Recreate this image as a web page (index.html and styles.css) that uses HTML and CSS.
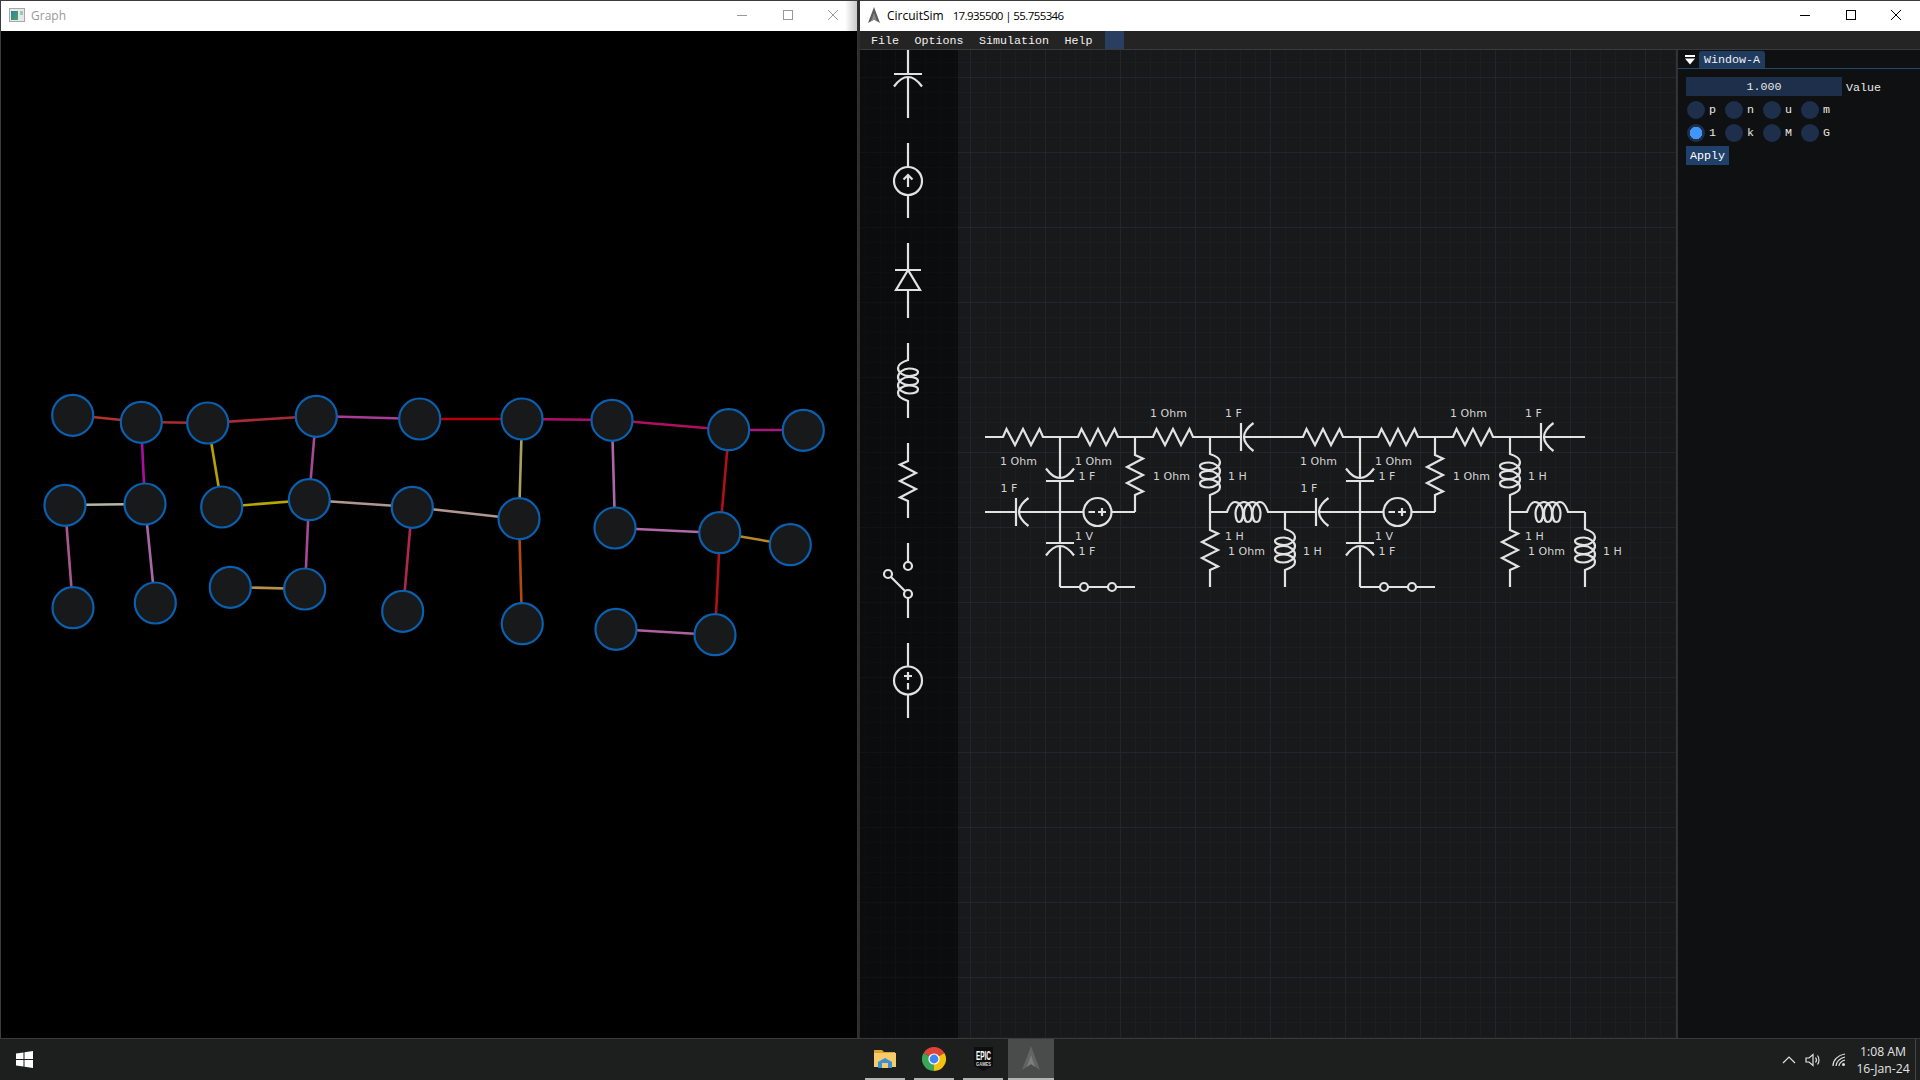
FILE: index.html
```html
<!DOCTYPE html>
<html lang="en">
<head>
    <meta charset="UTF-8">
    <title>CircuitSim</title>
    <link rel="stylesheet" href="styles.css">
</head>
<body>
    <div class="desktop">

        <!-- graph window -->
        <section class="window window-graph">
            <div class="titlebar inactive">
                <svg class="app-icon" width="16" height="14" viewBox="0 0 16 14">
                    <defs>
                        <linearGradient id="graphIcon" x1="0" y1="0" x2="1" y2="1">
                            <stop offset="0" stop-color="#2f7f9f"/>
                            <stop offset="1" stop-color="#4fa060"/>
                        </linearGradient>
                    </defs>
                    <rect x="0.5" y="0.5" width="15" height="13" fill="#e8e8e8" stroke="#a8a8a8"/>
                    <rect x="2" y="3" width="7" height="9" fill="url(#graphIcon)"/>
                    <rect x="11" y="3" width="3" height="4" fill="#9fc8b0"/>
                </svg>
                <span class="title-text">Graph</span>
                <div class="win-controls">
                    <span class="win-btn"><svg width="12" height="12" viewBox="0 0 12 12"><path d="M1 6.5H11"/></svg></span>
                    <span class="win-btn"><svg width="12" height="12" viewBox="0 0 12 12"><rect x="1.5" y="1.5" width="9" height="9"/></svg></span>
                    <span class="win-btn"><svg width="12" height="12" viewBox="0 0 12 12"><path d="M1 1L11 11M11 1L1 11"/></svg></span>
                </div>
            </div>
            <div class="graph-client">
                <svg class="graph-svg" width="856" height="1007" viewBox="1 31 856 1007">
                    <g class="edges">
                        <line x1="73" y1="415" x2="141" y2="422" stroke="#b03428"/>
                        <line x1="141" y1="422" x2="208" y2="423" stroke="#a82c30"/>
                        <line x1="208" y1="423" x2="316" y2="416" stroke="#a82c38"/>
                        <line x1="316" y1="416" x2="420" y2="419" stroke="#a83c98"/>
                        <line x1="141" y1="422" x2="145" y2="504" stroke="#a810a0"/>
                        <line x1="208" y1="423" x2="222" y2="507" stroke="#b8a000"/>
                        <line x1="222" y1="507" x2="309" y2="500" stroke="#b8a800"/>
                        <line x1="316" y1="416" x2="309" y2="500" stroke="#a84898"/>
                        <line x1="65" y1="505" x2="145" y2="504" stroke="#b8b8a0"/>
                        <line x1="65" y1="505" x2="73" y2="608" stroke="#a85890"/>
                        <line x1="145" y1="504" x2="155" y2="603" stroke="#a868a8"/>
                        <line x1="309" y1="500" x2="305" y2="589" stroke="#a84898"/>
                        <line x1="230" y1="587" x2="305" y2="589" stroke="#b89048"/>
                        <line x1="309" y1="500" x2="412" y2="507" stroke="#b09890"/>
                        <line x1="412" y1="507" x2="403" y2="611" stroke="#b02850"/>
                        <line x1="412" y1="507" x2="519" y2="519" stroke="#b09890"/>
                        <line x1="420" y1="419" x2="522" y2="419" stroke="#b80008"/>
                        <line x1="522" y1="419" x2="612" y2="420" stroke="#b01068"/>
                        <line x1="612" y1="420" x2="729" y2="430" stroke="#b01060"/>
                        <line x1="729" y1="430" x2="803" y2="430" stroke="#a81878"/>
                        <line x1="522" y1="419" x2="519" y2="519" stroke="#a8a060"/>
                        <line x1="612" y1="420" x2="615" y2="528" stroke="#a868a8"/>
                        <line x1="729" y1="430" x2="720" y2="533" stroke="#b01018"/>
                        <line x1="615" y1="528" x2="720" y2="533" stroke="#b068a8"/>
                        <line x1="720" y1="533" x2="790" y2="545" stroke="#b88828"/>
                        <line x1="519" y1="519" x2="522" y2="624" stroke="#b04810"/>
                        <line x1="720" y1="533" x2="715" y2="635" stroke="#b01018"/>
                        <line x1="616" y1="629" x2="715" y2="635" stroke="#b060a0"/>
                    </g>
                    <g class="nodes">
                        <circle cx="72.7" cy="415.3" r="20.5"/>
                        <circle cx="141.3" cy="422.3" r="20.5"/>
                        <circle cx="207.7" cy="423" r="20.5"/>
                        <circle cx="316.3" cy="416.3" r="20.5"/>
                        <circle cx="419.7" cy="419" r="20.5"/>
                        <circle cx="522" cy="419" r="20.5"/>
                        <circle cx="612" cy="420.3" r="20.5"/>
                        <circle cx="728.7" cy="429.7" r="20.5"/>
                        <circle cx="803.3" cy="430.3" r="20.5"/>
                        <circle cx="65" cy="505.3" r="20.5"/>
                        <circle cx="145" cy="504" r="20.5"/>
                        <circle cx="221.7" cy="507" r="20.5"/>
                        <circle cx="309.3" cy="499.7" r="20.5"/>
                        <circle cx="412.3" cy="507.3" r="20.5"/>
                        <circle cx="519" cy="518.7" r="20.5"/>
                        <circle cx="615" cy="528" r="20.5"/>
                        <circle cx="719.7" cy="532.7" r="20.5"/>
                        <circle cx="790.3" cy="544.7" r="20.5"/>
                        <circle cx="73" cy="607.7" r="20.5"/>
                        <circle cx="155.3" cy="603" r="20.5"/>
                        <circle cx="230.3" cy="587.3" r="20.5"/>
                        <circle cx="304.7" cy="589" r="20.5"/>
                        <circle cx="402.7" cy="611.3" r="20.5"/>
                        <circle cx="522.3" cy="623.7" r="20.5"/>
                        <circle cx="616" cy="629.3" r="20.5"/>
                        <circle cx="715" cy="634.7" r="20.5"/>
                    </g>
                </svg>
            </div>
        </section>

        <!-- circuit window -->
        <section class="window window-sim">
            <div class="titlebar">
                <svg class="app-icon spire-icon" width="14" height="17" viewBox="0 0 14 17">
                    <path d="M7 0L13 16L7 12.5L1 16Z" fill="#5c5c5c"/>
                    <path d="M7 6L10 14.5L7 12.5L4 14.5Z" fill="#8a8a8a"/>
                </svg>
                <span class="title-text">CircuitSim</span>
                <span class="title-text title-coords">17.935500 | 55.755346</span>
                <div class="win-controls">
                    <span class="win-btn"><svg width="12" height="12" viewBox="0 0 12 12"><path d="M1 6.5H11"/></svg></span>
                    <span class="win-btn"><svg width="12" height="12" viewBox="0 0 12 12"><rect x="1.5" y="1.5" width="9" height="9"/></svg></span>
                    <span class="win-btn"><svg width="12" height="12" viewBox="0 0 12 12"><path d="M1 1L11 11M11 1L1 11"/></svg></span>
                </div>
            </div>

            <nav class="menubar">
                <span>File</span>
                <span>Options</span>
                <span>Simulation</span>
                <span>Help</span>
                <span class="menu-block"></span>
            </nav>

            <div class="sim-body">
                <div class="canvas">
                    <div class="palette"></div>

                    <svg class="circuit-svg" width="816" height="988" viewBox="860 50 816 988">
                        <defs>
                            <g id="res" class="wire">
                                <path d="M0 0H18L21.5 -8L30 8L38 -8L46 8L54.5 -8L58 0H75"/>
                            </g>
                            <g id="cap" class="wire">
                                <path d="M0 0H31M31 -14V14M34 0H75"/>
                                <path d="M43.5 -14Q24.5 0 43.5 14"/>
                            </g>
                            <g id="ind" class="wire">
                                <path d="M0 0H17C19 -6 22 -10 25 -10C30 -10 33 -4 33 1C33 7 31 10 29 10C27 10 25.5 6 25.5 1C25.5 -5 30 -10 34 -10C39 -10 42 -4 42 1C42 7 40 10 37.7 10C35.5 10 34 6 34 1C34 -5 38 -10 42.5 -10C47 -10 50.5 -4 50.5 1C50.5 7 48.5 10 46.3 10C44 10 42.5 6 42.5 1C42.5 -5 46 -10 50 -10C53 -10 56 -6 58 0H75"/>
                            </g>
                            <g id="volt" class="wire">
                                <path d="M0 0H23.5M51.5 0H75"/>
                                <circle cx="37.5" cy="0" r="14"/>
                                <path d="M28.5 0H35M38 0H46M42 -4V4"/>
                            </g>
                            <g id="block">
                                <use href="#res" x="985" y="437"/>
                                <use href="#res" x="1060" y="437"/>
                                <use href="#res" x="1135" y="437"/>
                                <use href="#cap" transform="translate(1210 437)"/>
                                <use href="#cap" transform="translate(985 512)"/>
                                <use href="#cap" transform="translate(1060 512) rotate(-90)"/>
                                <use href="#cap" transform="translate(1060 512) rotate(90)"/>
                                <use href="#volt" transform="translate(1060 512)"/>
                                <use href="#res" transform="translate(1135 437) rotate(90)"/>
                                <use href="#ind" transform="translate(1210 437) rotate(90)"/>
                                <use href="#ind" transform="translate(1210 512)"/>
                                <use href="#res" transform="translate(1210 512) rotate(90)"/>
                                <use href="#ind" transform="translate(1285 512) rotate(90)"/>
                                <!-- switch on the bottom row -->
                                <g class="wire">
                                    <path d="M1060 587H1135"/>
                                    <circle class="pin" cx="1084" cy="587" r="4"/>
                                    <circle class="pin" cx="1112" cy="587" r="4"/>
                                </g>
                            </g>
                        </defs>

                        <use href="#block"/>
                        <use href="#block" x="300"/>

                        <!-- parts palette -->
                        <use href="#cap" transform="translate(908 43) rotate(90)"/>
                        <g class="wire">
                            <path d="M908 143V167M908 195V218"/>
                            <circle cx="908" cy="181" r="14"/>
                            <path d="M908 187V175M903.5 179.5L908 175L912.5 179.5"/>
                        </g>
                        <g class="wire">
                            <path d="M908 243V270M895 270H921M908 270L896 290H920Z M895 290H921M908 290V318"/>
                        </g>
                        <use href="#ind" transform="translate(908 343) rotate(90) scale(1 -1)"/>
                        <use href="#res" transform="translate(908 443) rotate(90) scale(1 -1)"/>
                        <g class="wire">
                            <path d="M908 543V562M908 598V618M891 577L905 591"/>
                            <circle cx="908" cy="566" r="4"/>
                            <circle cx="888" cy="574" r="4"/>
                            <circle cx="908" cy="594" r="4"/>
                        </g>
                        <use href="#volt" transform="translate(908 718) rotate(-90)"/>

                        <!-- part labels -->
                        <g class="labels">
                            <text x="1150" y="417">1 Ohm</text>
                            <text x="1225" y="417">1 F</text>
                            <text x="1000" y="465">1 Ohm</text>
                            <text x="1075" y="465">1 Ohm</text>
                            <text x="1078.5" y="480">1 F</text>
                            <text x="1153" y="480">1 Ohm</text>
                            <text x="1228" y="480">1 H</text>
                            <text x="1000.5" y="492">1 F</text>
                            <text x="1075" y="540">1 V</text>
                            <text x="1078.5" y="555">1 F</text>
                            <text x="1225" y="540">1 H</text>
                            <text x="1228" y="555">1 Ohm</text>
                            <text x="1303" y="555">1 H</text>

                            <text x="1450" y="417">1 Ohm</text>
                            <text x="1525" y="417">1 F</text>
                            <text x="1300" y="465">1 Ohm</text>
                            <text x="1375" y="465">1 Ohm</text>
                            <text x="1378.5" y="480">1 F</text>
                            <text x="1453" y="480">1 Ohm</text>
                            <text x="1528" y="480">1 H</text>
                            <text x="1300.5" y="492">1 F</text>
                            <text x="1375" y="540">1 V</text>
                            <text x="1378.5" y="555">1 F</text>
                            <text x="1525" y="540">1 H</text>
                            <text x="1528" y="555">1 Ohm</text>
                            <text x="1603" y="555">1 H</text>
                        </g>
                    </svg>
                </div>

                <aside class="panel">
                    <div class="tab-bar">
                        <svg class="tab-arrow" width="10" height="10" viewBox="0 0 10 10">
                            <path d="M0 0H10V2H0Z M0 3.5H10L5 9.5Z" fill="#fff"/>
                        </svg>
                        <span class="tab">Window-A</span>
                    </div>
                    <div class="panel-body">
                        <div class="value-row">
                            <div class="value-input">1.000</div>
                            <span class="value-label">Value</span>
                        </div>
                        <div class="radio-grid">
                            <label class="radio"><i></i>p</label>
                            <label class="radio"><i></i>n</label>
                            <label class="radio"><i></i>u</label>
                            <label class="radio"><i></i>m</label>
                            <label class="radio checked"><i></i>1</label>
                            <label class="radio"><i></i>k</label>
                            <label class="radio"><i></i>M</label>
                            <label class="radio"><i></i>G</label>
                        </div>
                        <button class="apply">Apply</button>
                    </div>
                </aside>
            </div>
        </section>
    </div>

    <!-- taskbar -->
    <footer class="taskbar">
        <svg class="start" width="17" height="17" viewBox="0 0 17 17">
            <path d="M0 2.5L7.5 1.4V8H0ZM8.5 1.3L17 0V8H8.5ZM0 9H7.5V15.6L0 14.5ZM8.5 9H17V17L8.5 15.7Z" fill="#fff"/>
        </svg>

        <div class="task-icons">
            <div class="task-item">
                <svg width="22" height="19" viewBox="0 0 22 19">
                    <path d="M0 1H8L10 3H21V6H0Z" fill="#dfa32f"/>
                    <rect x="0" y="4" width="22" height="14" fill="#f6cb6c"/>
                    <path d="M4 13L11 9L18 13V19H4Z" fill="#3b90d4"/>
                    <rect x="8" y="14" width="6" height="5" fill="#f6cb6c"/>
                </svg>
            </div>
            <div class="task-item">
                <svg width="24" height="24" viewBox="0 0 24 24">
                    <path d="M12 12L1.6 6A12 12 0 0 1 22.4 6Z" fill="#db4437"/>
                    <path d="M12 12L22.4 6A12 12 0 0 1 12 24Z" fill="#f4c20d"/>
                    <path d="M12 12L12 24A12 12 0 0 1 1.6 6Z" fill="#3aa757"/>
                    <circle cx="12" cy="12" r="5.6" fill="#fff"/>
                    <circle cx="12" cy="12" r="4.4" fill="#4285f4"/>
                </svg>
            </div>
            <div class="task-item">
                <svg width="21" height="24" viewBox="0 0 21 24">
                    <path d="M1 0H20V19L10.5 24L1 19Z" fill="#0e0e0e"/>
                    <text class="epic-big" transform="translate(10.5 13) scale(0.72 1.33)">EPIC</text>
                    <text class="epic-small" transform="translate(10.5 18.5) scale(0.9 1)">GAMES</text>
                </svg>
            </div>
            <div class="task-item active">
                <svg width="20" height="25" viewBox="0 0 20 25">
                    <path d="M10 0L19 24L10 18L1 24Z" fill="#636565"/>
                    <path d="M10 9L14 21L10 18L6 21Z" fill="#7d7f7f"/>
                </svg>
            </div>
        </div>

        <div class="tray">
            <svg class="tray-icon tray-chevron" width="14" height="8" viewBox="0 0 14 8"><path d="M1 7L7 1L13 7"/></svg>
            <svg class="tray-icon tray-sound" width="16" height="14" viewBox="0 0 16 14"><path d="M1 5H4L8 1.5V12.5L4 9H1ZM10.5 4.5C11.7 6 11.7 8 10.5 9.5M12.5 2.5C14.5 5 14.5 9 12.5 11.5"/></svg>
            <svg class="tray-icon tray-wifi" width="14" height="14" viewBox="0 0 14 14"><path d="M1 13C1 7 6 2 13 1M4 13C4 9 8 5 13 4M7 13C7 11 9 8 13 7"/><circle class="wifi-dot" cx="11.5" cy="11.5" r="1.5"/></svg>
            <div class="clock">
                <span>1:08 AM</span>
                <span>16-Jan-24</span>
            </div>
            <span class="show-desktop"></span>
        </div>
    </footer>
</body>
</html>
```

FILE: styles.css
```css
* {
    margin: 0;
    padding: 0;
    box-sizing: border-box;
}

body {
    width: 1920px;
    height: 1080px;
    overflow: hidden;
    display: flex;
    flex-direction: column;
    background-color: #000;
    font-family: "Liberation Mono", monospace;
    font-size: 11.67px;
    color: #e8e8e8;
}

.desktop {
    display: flex;
    height: 1038px;
}

.window {
    display: flex;
    flex-direction: column;
    height: 100%;
}

.window-graph {
    width: 858px;
    border-left: 1px solid #3c3c3c;
    border-right: 1px solid #333;
}

.window-sim {
    flex: 1;
    min-width: 0;
    border-left: 2px solid #2c2c2c;
}


/* title bars */
.titlebar {
    display: flex;
    align-items: center;
    height: 31px;
    flex-shrink: 0;
    padding-bottom: 2px;
    border-top: 1px solid #3c3c3c;
    background-color: #fff;
    font-family: "Open Sans", sans-serif;
    font-size: 12px;
    color: #000;
}

.titlebar.inactive {
    background: linear-gradient(90deg, #fff calc(100% - 12px), #c8c8c8);
    color: #999;
}

.app-icon {
    margin-left: 8px;
    margin-right: 6px;
}

.spire-icon {
    margin-left: 7px;
    margin-right: 6px;
}

.title-coords {
    margin-left: 9px;
    font-size: 11.5px;
    letter-spacing: -0.6px;
}

.win-controls {
    display: flex;
    margin-left: auto;
    margin-right: 1px;
}

.win-btn {
    display: flex;
    align-items: center;
    justify-content: center;
    width: 45.5px;
    height: 28px;
}

.win-btn svg {
    fill: none;
    stroke: #000;
    stroke-width: 1;
}

.inactive .win-btn svg {
    stroke: #999;
}


/* graph */
.graph-client {
    flex: 1;
    background-color: #000;
}

.graph-svg {
    display: block;
}

.edges line {
    stroke-width: 2.6;
}

.nodes circle {
    fill: #17191b;
    stroke: #0a5fae;
    stroke-width: 2.2;
}


/* circuit window */
.menubar {
    display: flex;
    align-items: center;
    gap: 15.5px;
    height: 19px;
    flex-shrink: 0;
    padding: 2px 0 0 11px;
    background-color: #242424;
    border-bottom: 1px solid #3a3a3a;
    color: #f0f0f0;
}

.menu-block {
    width: 19px;
    height: 18px;
    margin: -2px 0 0 -3px;
    background-color: #2a3f5f;
}

.sim-body {
    display: flex;
    flex: 1;
    min-height: 0;
}

.canvas {
    position: relative;
    flex: 1;
    min-width: 0;
    background-color: #17191b;
    background-image:
        linear-gradient(90deg, #232528 1px, transparent 1px),
        linear-gradient(#232528 1px, transparent 1px),
        linear-gradient(90deg, #1c1e20 1px, transparent 1px),
        linear-gradient(#1c1e20 1px, transparent 1px);
    background-size: 75px 75px, 75px 75px, 15px 15px, 15px 15px;
    background-position: 35px 0, 0 27px, 5px 0, 0 12px;
}

.palette {
    width: 98px;
    height: 100%;
    background-color: rgba(0, 0, 0, 0.5);
}

.circuit-svg {
    position: absolute;
    left: 0;
    top: 0;
}

.wire {
    fill: none;
    stroke: #e2e2e2;
    stroke-width: 2.2;
}

.pin {
    fill: #17191b;
}

.labels text {
    fill: #d4d4d4;
    font-family: "DejaVu Sans", sans-serif;
    font-size: 11px;
}


/* Window-A panel */
.panel {
    width: 244px;
    flex-shrink: 0;
    background-color: #0f1011;
    border-left: 2px solid #333;
}

.tab-bar {
    display: flex;
    align-items: flex-end;
    height: 19px;
    padding-left: 7px;
    border-bottom: 1px solid #24466f;
}

.tab-arrow {
    margin: 0 4px 3px 0;
}

.tab {
    height: 17px;
    line-height: 19px;
    padding: 0 5px;
    background-color: #1f3b60;
    border-radius: 3px 3px 0 0;
    color: #f0f0f0;
}

.panel-body {
    padding: 8px 8px;
}

.value-row {
    display: flex;
    align-items: center;
    gap: 4px;
}

.value-input {
    width: 156px;
    height: 19px;
    line-height: 21px;
    text-align: center;
    background-color: #1d2f4a;
}

.value-label {
    padding-top: 2px;
}

.radio-grid {
    display: grid;
    grid-template-columns: repeat(4, 38px);
    grid-auto-rows: 23px;
    margin-top: 2px;
}

.radio {
    display: flex;
    align-items: center;
    gap: 4px;
    padding-left: 1px;
}

.radio i {
    width: 18px;
    height: 18px;
    border-radius: 50%;
    background-color: #1d2f4a;
}

.radio.checked i {
    background-color: #1d2f4a;
    background-image: radial-gradient(circle, #4296fa 0, #4296fa 6px, transparent 6.5px);
}

.apply {
    display: block;
    width: 43px;
    height: 19px;
    margin-top: 2px;
    border: none;
    background-color: #20406a;
    font: inherit;
    color: #fff;
}


/* taskbar */
.taskbar {
    display: flex;
    align-items: center;
    height: 42px;
    border-top: 1px solid #3a3a3a;
    background-color: #1d1f1f;
}

.start {
    margin-left: 16px;
}

.task-icons {
    display: flex;
    margin-left: 832px;
    gap: 9px;
}

.task-item {
    display: flex;
    align-items: center;
    justify-content: center;
    width: 40px;
    height: 41px;
    border-bottom: 2px solid #b4b4b4;
}

.task-item.active {
    width: 46px;
    margin-left: -4px;
    background-color: #4a4c4c;
}

.epic-big {
    fill: #fff;
    font-family: "Liberation Sans", sans-serif;
    font-size: 9px;
    font-weight: bold;
    text-anchor: middle;
}

.epic-small {
    fill: #ddd;
    font-family: "Liberation Sans", sans-serif;
    font-size: 4.5px;
    font-weight: bold;
    text-anchor: middle;
}

.tray {
    display: flex;
    align-items: center;
    margin-left: auto;
    height: 100%;
}

.tray-chevron {
    margin-right: 9px;
}

.tray-sound {
    margin-right: 11px;
}

.tray-wifi {
    margin-right: 9px;
}

.tray-icon {
    fill: none;
    stroke: #e0e0e0;
    stroke-width: 1.2;
}

.wifi-dot {
    fill: #e0e0e0;
    stroke: none;
}

.clock {
    display: flex;
    flex-direction: column;
    align-items: center;
    width: 56px;
    font-family: "Open Sans", sans-serif;
    font-size: 12.2px;
    line-height: 17px;
    color: #e4e4e4;
}

.show-desktop {
    width: 1px;
    height: 100%;
    margin: 0 4px 0 4px;
    background-color: #444;
}
```
